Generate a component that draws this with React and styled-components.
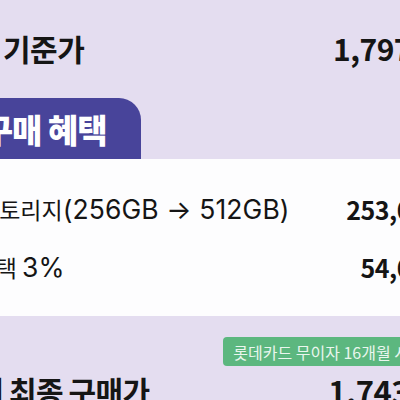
import React from 'react';
import styled, { createGlobalStyle } from 'styled-components';

const GlobalStyle = createGlobalStyle`
  html, body {
    margin: 0;
    padding: 0;
    background: #e4ddf0;
  }
  body {
    font-family: "Noto Sans CJK KR", "Noto Sans", sans-serif;
    color: #151515;
  }
`

const Page = styled.div`
  width: 400px;
  height: 400px;
  overflow: hidden;
  background: #e4ddf0;
`

const Inner = styled.div`
  width: 640px;
  margin-left: -120px;
  display: flex;
  flex-direction: column;
`

const TopRow = styled.div`
  height: 98px;
  display: flex;
  align-items: center;
  justify-content: space-between;
  padding-bottom: 2px;
  box-sizing: border-box;
`

const Label = styled.span`
  font-size: ${p => p.$size}px;
  font-weight: 700;
  letter-spacing: -0.5px;
  word-spacing: ${p => p.$ws || 0}px;
  margin-left: ${p => p.$indent}px;
  white-space: nowrap;
`

const DetailLabel = styled.span`
  font-size: 23px;
  font-weight: 400;
  margin-left: ${p => p.$indent}px;
  white-space: nowrap;
`

const Latin = styled.span`
  font-family: Inter, "Noto Sans CJK KR", sans-serif;
  font-size: 26.5px;
  letter-spacing: 0.1px;
`

const Value = styled.span`
  font-size: ${p => p.$size}px;
  font-weight: 700;
  letter-spacing: -0.5px;
  margin-right: ${p => p.$trail}px;
  white-space: nowrap;
`

const TabRow = styled.div`
  display: flex;
`

const Tab = styled.div`
  width: 261px;
  height: 61px;
  background: #48449a;
  border-top-right-radius: 22px;
  display: flex;
  align-items: center;
  overflow: hidden;
`

const TabText = styled.span`
  color: #fff;
  font-size: 33px;
  font-weight: 900;
  letter-spacing: -1px;
  margin-left: ${p => p.$indent}px;
  white-space: nowrap;
`

const Panel = styled.div`
  background: #fdfdfe;
  height: 157px;
  display: flex;
  flex-direction: column;
  padding-top: 32px;
  box-sizing: border-box;
  gap: 22px;
`

const Row = styled.div`
  display: flex;
  align-items: center;
  justify-content: space-between;
  height: 36px;
`

const Bottom = styled.div`
  display: flex;
  flex-direction: column;
  padding-top: 21px;
  gap: 6px;
`

const BadgeRow = styled.div`
  display: flex;
  justify-content: flex-end;
`

const Badge = styled.div`
  background: #5cb77f;
  color: #eaf6ee;
  font-size: 16px;
  height: 29px;
  border-radius: 4px;
  display: flex;
  align-items: center;
  padding: 0 12px 0 10px;
  white-space: nowrap;
  margin-right: ${p => p.$trail}px;
`

const App = () => {
  return <>
    <GlobalStyle />
    <Page>
      <Inner>
        <TopRow>
          <Label $size={30} $indent={123}>기준가</Label>
          <Value $size={30} $trail={21}>1,797,400원</Value>
        </TopRow>

        <TabRow>
          <Tab>
            <TabText $indent={8}>이달의 구매 혜택</TabText>
          </Tab>
        </TabRow>

        <Panel>
          <Row>
            <DetailLabel $indent={98}>스토리지<Latin>(256GB → 512GB)</Latin></DetailLabel>
            <Value $size={25} $trail={58}>253,000원</Value>
          </Row>
          <Row>
            <DetailLabel $indent={47}>카드 혜택 <Latin>3%</Latin></DetailLabel>
            <Value $size={25} $trail={58}>54,000원</Value>
          </Row>
        </Panel>

        <Bottom>
          <BadgeRow>
            <Badge $trail={99}>롯데카드 무이자 16개월 시</Badge>
          </BadgeRow>
          <Row>
            <Label $size={30} $indent={-39} $ws={-1}>삼성닷컴에서 최종 구매가</Label>
            <Value $size={31} $trail={20}>1,743,400원</Value>
          </Row>
        </Bottom>
      </Inner>
    </Page>
  </>
}

export default App;
